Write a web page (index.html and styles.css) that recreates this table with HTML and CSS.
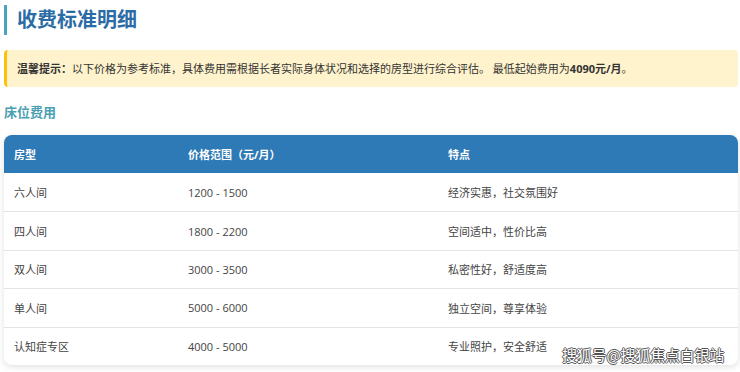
FILE: index.html
```html
<!DOCTYPE html>
<html lang="zh-CN">
<head>
  <meta charset="UTF-8" />
  <meta name="viewport" content="width=device-width, initial-scale=1.0"/>
  <title>收费标准明细</title>
  <link rel="stylesheet" href="styles.css">
</head>
<body>

  <h1 class="page-title">收费标准明细</h1>

  <div class="notice">
    <strong>温馨提示：</strong>以下价格为参考标准，具体费用需根据长者实际身体状况和选择的房型进行综合评估。 最低起始费用为<strong>4090元/月</strong>。
  </div>

  <h2 class="sub-title">床位费用</h2>

  <table class="price-table">
    <thead>
      <tr>
        <th class="col-type">房型</th>
        <th class="col-price">价格范围（元/月）</th>
        <th>特点</th>
      </tr>
    </thead>
    <tbody>
      <tr><td>六人间</td><td>1200 - 1500</td><td>经济实惠，社交氛围好</td></tr>
      <tr><td>四人间</td><td>1800 - 2200</td><td>空间适中，性价比高</td></tr>
      <tr><td>双人间</td><td>3000 - 3500</td><td>私密性好，舒适度高</td></tr>
      <tr><td>单人间</td><td>5000 - 6000</td><td>独立空间，尊享体验</td></tr>
      <tr><td>认知症专区</td><td>4000 - 5000</td><td>专业照护，安全舒适</td></tr>
    </tbody>
  </table>

  <div class="watermark">搜狐号@搜狐焦点白银站</div>

</body>
</html>
```

FILE: styles.css
```css
* {
  box-sizing: border-box;
  margin: 0;
  padding: 0;
}

body {
  font-family: "Open Sans", "Noto Sans CJK SC", sans-serif;
  background: #fff;
  color: #333;
  padding: 5px 2px 0 4px;
  position: relative;
  height: 372px;
  overflow: hidden;
}

.page-title {
  border-left: 3px solid #4aa3b6;
  padding-left: 10px;
  height: 30px;
  line-height: 30px;
  font-size: 20px;
  font-weight: 700;
  color: #2b6ca5;
}

.notice {
  margin-top: 15px;
  background: #fff3cd;
  border-left: 3px solid #ffc107;
  border-radius: 4px;
  padding: 10px 10px;
  font-size: 11px;
  line-height: 17px;
  color: #333;
}

.notice strong {
  font-weight: 700;
}

.sub-title {
  margin: 16px 0 14px;
  font-size: 13px;
  line-height: 18px;
  font-weight: 700;
  color: #4a9fb3;
}

.price-table {
  width: 100%;
  border-collapse: separate;
  border-spacing: 0;
  border-radius: 8px;
  overflow: hidden;
  box-shadow: 0 2px 6px rgba(0,0,0,0.12);
  font-size: 11px;
  text-align: left;
}

.price-table th {
  background: #2e7ab6;
  color: #fff;
  font-weight: 700;
  height: 38px;
  padding: 0 10px;
}

.price-table td {
  height: 38.4px;
  padding: 0 10px;
  color: #444;
  border-top: 1px solid #e4e4e4;
}

.price-table tbody tr:first-child td {
  border-top: none;
}

.col-type {
  width: 174px;
}

.col-price {
  width: 260px;
}

.watermark {
  position: absolute;
  right: 16px;
  bottom: 7px;
  font-size: 15px;
  line-height: 20px;
  letter-spacing: -0.2px;
  color: #fff;
  font-family: "Noto Sans CJK SC", sans-serif;
  text-shadow: 1px 0 0 #555, -1px 0 0 #555, 0 1px 0 #555, 0 -1px 0 #555;
}
```
